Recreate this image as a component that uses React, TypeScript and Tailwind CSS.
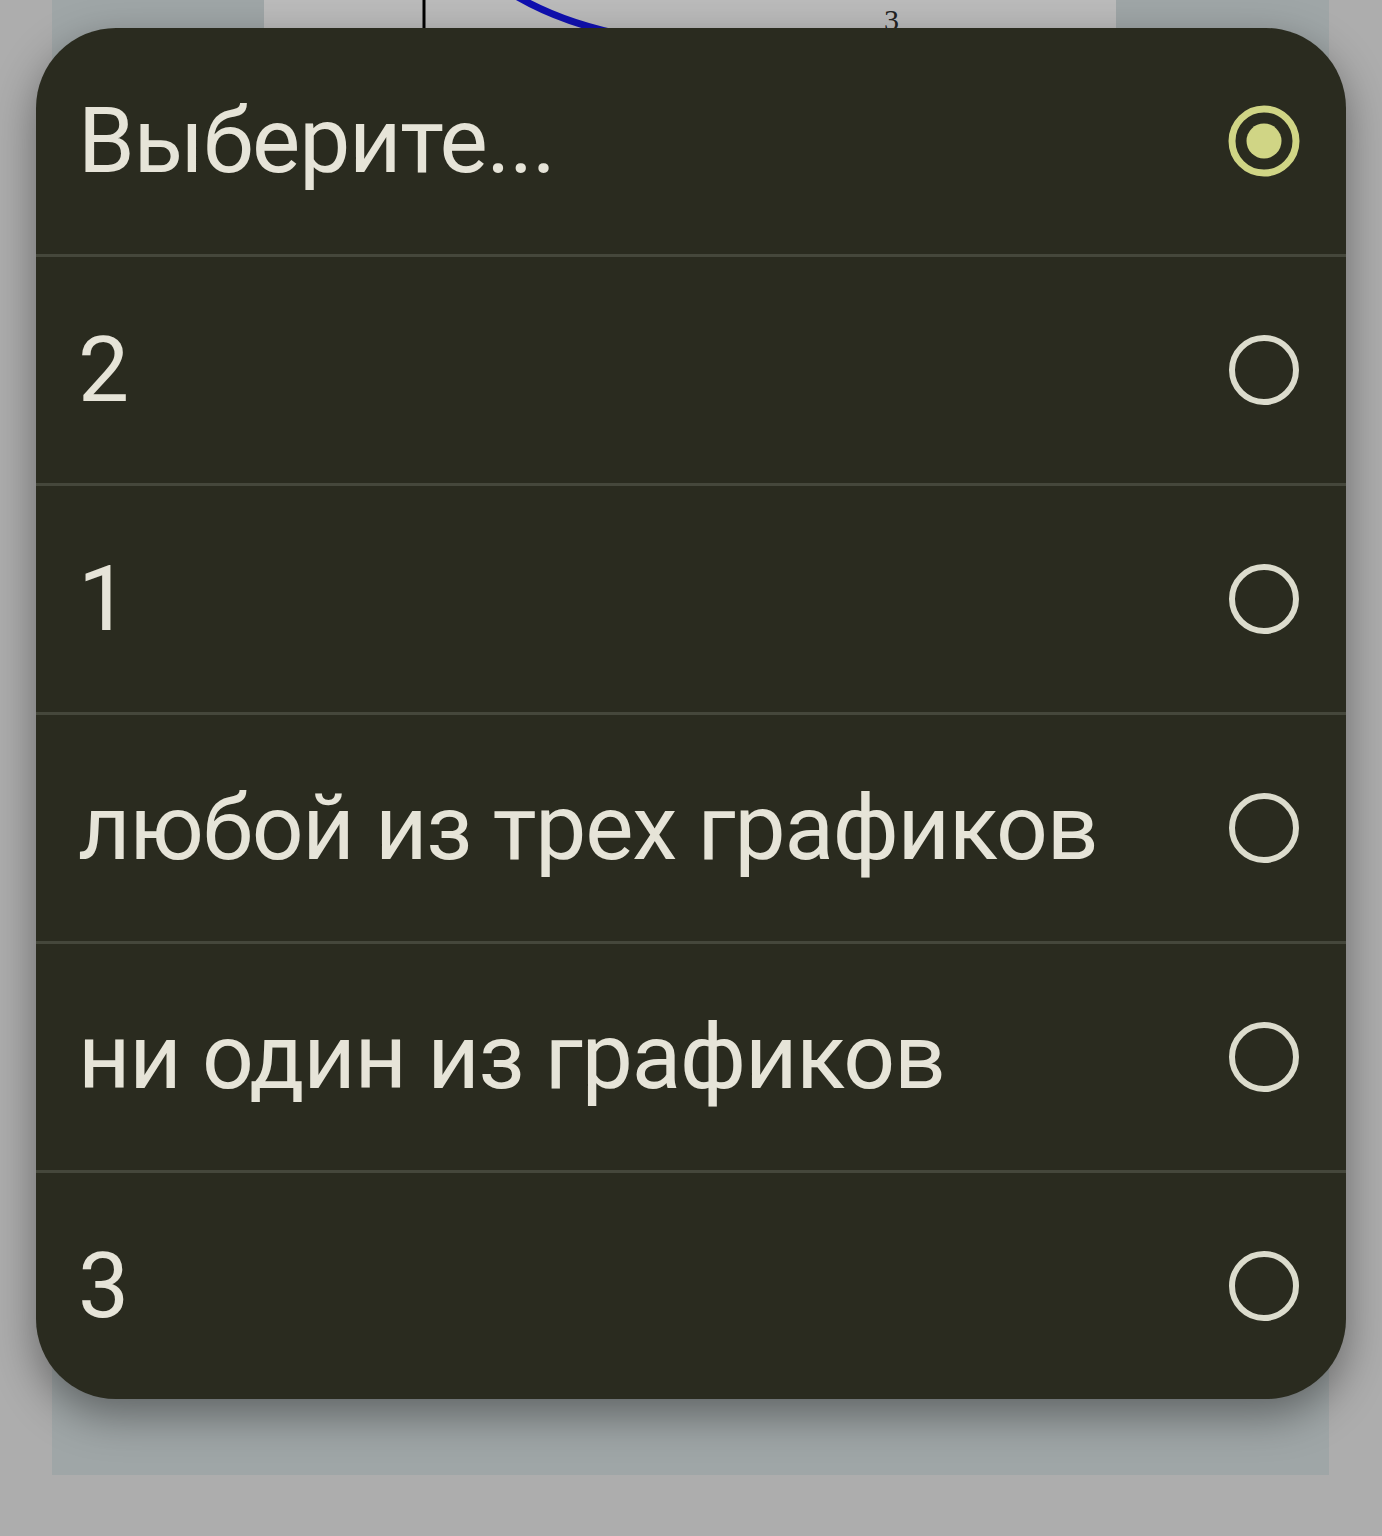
import { useState } from "react";

const OPTIONS = ["Выберите...", "2", "1", "любой из трех графиков", "ни один из графиков", "3"];

function Radio({ checked }: { checked: boolean }) {
  if (checked) {
    return (
      <svg width="74" height="74" viewBox="0 0 74 74">
        <circle cx="37" cy="37" r="32" fill="none" stroke="#d0d585" strokeWidth="7" />
        <circle cx="37" cy="37" r="17.5" fill="#d0d585" />
      </svg>
    );
  }
  return (
    <svg width="74" height="74" viewBox="0 0 74 74">
      <circle cx="37" cy="37" r="32" fill="none" stroke="#dcdccd" strokeWidth="6" />
    </svg>
  );
}

export default function App() {
  const [selected, setSelected] = useState(0);

  return (
    <div className="relative h-[1536px] w-full overflow-hidden bg-[#adadad]">
      {/* page behind the dialog */}
      <div className="ml-[52px] h-[1475px] w-[1277px] bg-[#9fa6a7]">
        <div className="ml-[212px] h-[60px] w-[852px] bg-[#bbbbbb]">
          <svg width="852" height="60" viewBox="0 0 852 60">
            <line x1="160" y1="0" x2="160" y2="40" stroke="#000" strokeWidth="3" />
            <path d="M252 -4 Q300 24 365 36" fill="none" stroke="#1010b0" strokeWidth="7" />
            <text x="620" y="30" fontSize="30" fontFamily="'Liberation Serif', serif" fill="#222">3</text>
          </svg>
        </div>
      </div>

      {/* option dialog */}
      <div className="absolute left-[36px] top-[28px] w-[1310px] overflow-hidden rounded-[80px] bg-[#2a2b1f] shadow-[0_16px_44px_rgba(0,0,0,0.4)]">
        {OPTIONS.map((o, i) => (
          <button
            key={o}
            onClick={() => setSelected(i)}
            className={`flex w-full items-center justify-between pl-[42px] pr-[45px] text-left ${
              i < OPTIONS.length - 1 ? "h-[229px] border-b-[3px] border-[#45473b]" : "h-[226px]"
            }`}
          >
            <span
              className="text-[91px] leading-none tracking-[-1.2px] text-[#e6e4d8]"
              style={{ fontFamily: "Roboto, 'Noto Sans', sans-serif" }}
            >
              {o}
            </span>
            <Radio checked={i === selected} />
          </button>
        ))}
      </div>
    </div>
  );
}
